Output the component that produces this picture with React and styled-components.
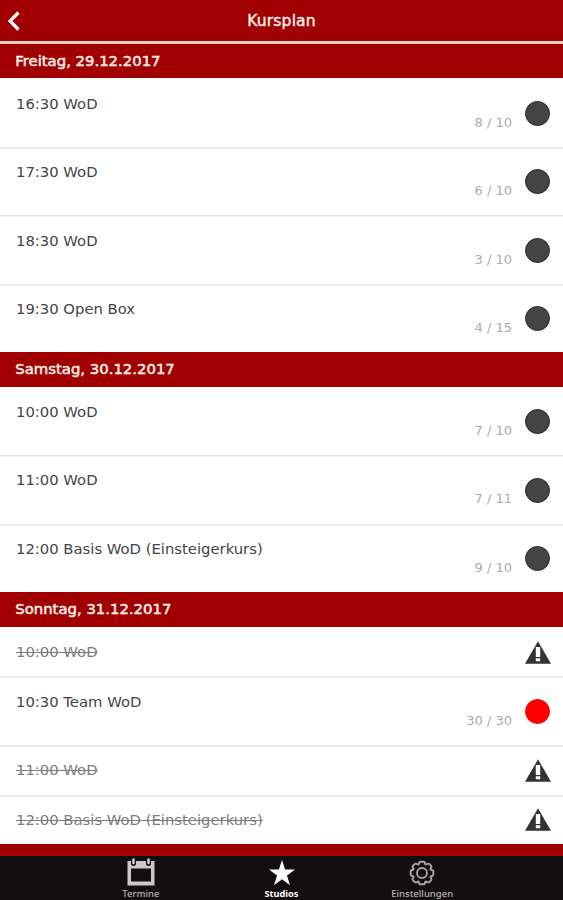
import styled, { createGlobalStyle } from "styled-components";

const days = [
  {
    title: "Freitag, 29.12.2017",
    courses: [
      { name: "16:30 WoD", places: "8 / 10" },
      { name: "17:30 WoD", places: "6 / 10" },
      { name: "18:30 WoD", places: "3 / 10" },
      { name: "19:30 Open Box", places: "4 / 15" },
    ],
  },
  {
    title: "Samstag, 30.12.2017",
    courses: [
      { name: "10:00 WoD", places: "7 / 10" },
      { name: "11:00 WoD", places: "7 / 11" },
      { name: "12:00 Basis WoD (Einsteigerkurs)", places: "9 / 10" },
    ],
  },
  {
    title: "Sonntag, 31.12.2017",
    courses: [
      { name: "10:00 WoD", cancelled: true },
      { name: "10:30 Team WoD", places: "30 / 30", full: true },
      { name: "11:00 WoD", cancelled: true },
      { name: "12:00 Basis WoD (Einsteigerkurs)", cancelled: true },
    ],
  },
];

function WarningIcon() {
  return (
    <svg width="26" height="23" viewBox="0 0 26 23">
      <path d="M13 0.3L26 22.7H0Z" fill="#333" />
      <path d="M10.8 6h4.4v10h-4.4zM10.8 17.2h4.4v3h-4.4z" fill="#fff" />
    </svg>
  );
}

function CalendarIcon() {
  return (
    <svg width="28" height="28" viewBox="0 0 28 28">
      <path
        fill="#c9c9c9"
        fillRule="evenodd"
        d="M0.5 3H27.5V27.5H0.5ZM4 10.5V23.5H24V10.5Z"
      />
      <path
        d="M6.5 0.5V5.5M21.5 0.5V5.5"
        stroke="#130f10"
        strokeWidth="5"
        strokeLinecap="round"
      />
      <path
        d="M6.5 1.5V5M21.5 1.5V5"
        stroke="#c9c9c9"
        strokeWidth="2.6"
        strokeLinecap="round"
      />
    </svg>
  );
}

function StarIcon() {
  return (
    <svg width="26" height="26" viewBox="0 0 26 26">
      <path
        fill="#fff"
        d="M13 0L16.1 9.6H26L18 15.5L21 25.2L13 19.3L5 25.2L8 15.5L0 9.6H9.9Z"
      />
    </svg>
  );
}

function GearIcon() {
  return (
    <svg
      width="26"
      height="26"
      viewBox="0 0 26 26"
      fill="none"
      stroke="#a5a5a5"
      strokeWidth="1.9"
      strokeLinejoin="round"
    >
      <path d="M9.8 4.2Q10 1.7 11.5 1.7H14.5Q16 1.7 16.2 4.2L17 4.6Q19.2 3 20.3 4L22 5.7Q23 6.8 21.4 9L21.8 9.8Q24.3 10 24.3 11.5V14.5Q24.3 16 21.8 16.2L21.4 17Q23 19.2 22 20.3L20.3 22Q19.2 23 17 21.4L16.2 21.8Q16 24.3 14.5 24.3H11.5Q10 24.3 9.8 21.8L9 21.4Q6.8 23 5.7 22L4 20.3Q3 19.2 4.6 17L4.2 16.2Q1.7 16 1.7 14.5V11.5Q1.7 10 4.2 9.8L4.6 9Q3 6.8 4 5.7L5.7 4Q6.8 3 9 4.6Z" />
      <circle cx="13" cy="13" r="5" />
    </svg>
  );
}

function Course({ course }) {
  return (
    <Row $short={course.cancelled}>
      <CourseName $cancelled={course.cancelled}>{course.name}</CourseName>
      {course.places && <Places>{course.places}</Places>}
      <Status>
        {course.cancelled ? <WarningIcon /> : <Dot $full={course.full} />}
      </Status>
    </Row>
  );
}

function App() {
  return (
    <>
      <GlobalStyle />
      <Screen>
        <TopBar>
          <BackButton aria-label="Zurück">
            <svg width="12" height="20" viewBox="0 0 12 20">
              <path
                d="M10.5 1.5L2 10L10.5 18.5"
                fill="none"
                stroke="#fff"
                strokeWidth="3.2"
              />
            </svg>
          </BackButton>
          <Title>Kursplan</Title>
        </TopBar>
        <List>
          {days.map((day) => (
            <section key={day.title}>
              <DayTitle>{day.title}</DayTitle>
              {day.courses.map((course) => (
                <Course key={course.name} course={course} />
              ))}
            </section>
          ))}
        </List>
        <TabBar>
          <Tab>
            <CalendarIcon />
            <span>Termine</span>
          </Tab>
          <Tab $active>
            <StarIcon />
            <span>Studios</span>
          </Tab>
          <Tab>
            <GearIcon />
            <span>Einstellungen</span>
          </Tab>
        </TabBar>
      </Screen>
    </>
  );
}

const GlobalStyle = createGlobalStyle`
  * {
    box-sizing: border-box;
  }

  body {
    margin: 0;
    font-family: "DejaVu Sans", sans-serif;
  }
`;

const Screen = styled.div`
  width: 563px;
  height: 900px;
  display: flex;
  flex-direction: column;
  background: #a00000;
  overflow: hidden;
`;

const TopBar = styled.header`
  height: 44px;
  flex: none;
  display: grid;
  grid-template-columns: 60px 1fr 60px;
  align-items: center;
  border-bottom: 3px solid #e3cccc;
`;

const BackButton = styled.button`
  display: flex;
  padding: 0 0 0 8px;
  border: none;
  background: none;
`;

const Title = styled.h1`
  margin: 0;
  padding-top: 1px;
  text-align: center;
  color: #fff0ea;
  font-size: 15.6px;
  font-weight: 400;
  letter-spacing: 0.15px;
  -webkit-text-stroke: 0.4px #fff0ea;
`;

const List = styled.main`
  flex: 1;
`;

const DayTitle = styled.h2`
  height: 34.4px;
  margin: 0;
  padding-left: 15.3px;
  color: #fff0ea;
  font-size: 14.85px;
  font-weight: 400;
  line-height: 34px;
  -webkit-text-stroke: 0.5px #fff0ea;
`;

const Row = styled.div`
  height: ${(props) => (props.$short ? "49.7px" : "68.5px")};
  display: flex;
  padding: 0 12px 0 16px;
  background: #fff;

  & + & {
    box-shadow: inset 0 1.5px #e6e6e6;
  }
`;

const CourseName = styled.div`
  flex: 1;
  padding-top: 16.2px;
  color: ${(props) => (props.$cancelled ? "#7c7c7c" : "#444")};
  font-size: 14.8px;
  line-height: 18px;
  text-decoration: ${(props) => (props.$cancelled ? "line-through" : "none")};
`;

const Places = styled.div`
  align-self: flex-end;
  padding-bottom: 15.3px;
  color: #aaa;
  font-size: 13px;
  line-height: 18px;
`;

const Status = styled.div`
  width: 26px;
  margin-left: 13px;
  padding-top: 1px;
  display: flex;
  align-items: center;
`;

const Dot = styled.div`
  width: 25px;
  height: 25px;
  border-radius: 50%;
  border: 1px solid ${(props) => (props.$full ? "#f00" : "#282828")};
  background: ${(props) => (props.$full ? "#f00" : "#444")};
`;

const TabBar = styled.nav`
  height: 44px;
  flex: none;
  display: flex;
  justify-content: center;
  background: #130f10;
`;

const Tab = styled.div`
  width: 140.7px;
  display: flex;
  flex-direction: column;
  align-items: center;
  justify-content: flex-end;
  color: ${(props) => (props.$active ? "#fff" : "#b5b5b5")};

  span {
    margin-top: 2px;
    font-family: "Noto Sans", sans-serif;
    font-size: ${(props) => (props.$active ? "9.2px" : "9.5px")};
    font-weight: ${(props) => (props.$active ? 700 : 500)};
    line-height: 12px;
  }
`;

export default App;
